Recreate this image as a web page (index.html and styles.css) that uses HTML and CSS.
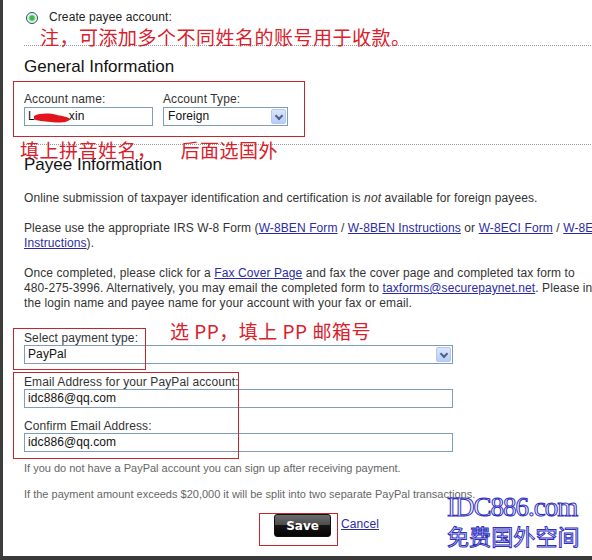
FILE: index.html
```html
<!DOCTYPE html>
<html lang="en">
<head>
  <meta charset="UTF-8" />
  <title>Create payee account</title>
  <link rel="stylesheet" href="styles.css">
</head>
<body>
  <div class="page">
    <div class="content">
      <div class="create-row"><span class="radio"></span>Create payee account:</div>

      <section class="block general">
        <h2>General Information</h2>
        <div class="field-row">
          <div class="field">
            <label>Account name:</label>
            <div class="box name-box">L<span class="hidden-part"></span>xin</div>
            <svg class="scribble" width="38" height="12" viewBox="0 0 38 12">
              <path d="M1 4 C7 1 16 1 24 3 C30 4 35 5 37 7 C35 11 26 11 18 10 C10 9 4 9 1 7 Z" fill="#e3151c"/>
            </svg>
          </div>
          <div class="field">
            <label>Account Type:</label>
            <div class="box select type-select">Foreign<span class="arrow"></span></div>
          </div>
        </div>
      </section>

      <section class="block payee">
        <h2>Payee Information</h2>
        <p>Online submission of taxpayer identification and certification is <em>not</em> available for foreign payees.</p>
        <p>Please use the appropriate IRS W-8 Form (<a href="#">W-8BEN Form</a> / <a href="#">W-8BEN Instructions</a> or <a href="#">W-8ECI Form</a> / <a href="#">W-8ECI Instructions</a>).</p>
        <p>Once completed, please click for a <a href="#">Fax Cover Page</a> and fax the cover page and completed tax form to <span class="nowrap">480-275-3996.</span> Alternatively, you may email the completed form to <a href="#">taxforms@securepaynet.net</a>. Please include the login name and payee name for your account with your fax or email.</p>

        <div class="form-part">
          <label>Select payment type:</label>
          <div class="box select wide">PayPal<span class="arrow"></span></div>
          <label class="gap">Email Address for your PayPal account:</label>
          <div class="box wide">idc886@qq.com</div>
          <label class="gap">Confirm Email Address:</label>
          <div class="box wide">idc886@qq.com</div>
        </div>

        <p class="note first">If you do not have a PayPal account you can sign up after receiving payment.</p>
        <p class="note">If the payment amount exceeds $20,000 it will be split into two separate PayPal transactions.</p>

        <div class="actions">
          <button class="save">Save</button>
          <a href="#" class="cancel">Cancel</a>
        </div>
      </section>
    </div>

    <!-- annotations drawn over the screenshot -->
    <div class="note-cn n1">注，可添加多个不同姓名的账号用于收款。</div>
    <div class="note-cn n2">填上拼音姓名，<span class="spacer"></span>后面选国外</div>
    <div class="note-cn n3">选 PP，填上 PP 邮箱号</div>
    <div class="mark m1"></div>
    <div class="mark m2"></div>
    <div class="mark m3"></div>
    <div class="mark m4"></div>

    <div class="watermark">
      <div class="wm-en">IDC886.com</div>
      <div class="wm-cn">免费国外空间</div>
    </div>
  </div>
</body>
</html>
```

FILE: styles.css
```css
* {
  box-sizing: border-box;
  margin: 0;
  padding: 0;
}

html, body {
  width: 592px;
  height: 560px;
  overflow: hidden;
  background: #fff;
}

body {
  font-family: "Liberation Sans", Arial, sans-serif;
  font-size: 12px;
  letter-spacing: 0.1px;
  color: #333;
}

.page {
  position: relative;
  width: 592px;
  height: 560px;
  border-left: 3px solid #3d3d3d;
  border-bottom: 4px solid #3a3a3a;
  overflow: hidden;
}

.content {
  width: 630px;
  padding-left: 21px;
  padding-top: 10px;
}

.nowrap {
  white-space: nowrap;
}

.create-row {
  display: flex;
  align-items: center;
  height: 15px;
  line-height: 15px;
  padding-left: 2px;
  color: #222;
}

.radio {
  width: 12px;
  height: 12px;
  border: 1px solid #1c5180;
  border-radius: 50%;
  margin-right: 11px;
  background: radial-gradient(circle, #3fb848 0 2px, #9ed9a0 3px, #f4f4f0 4px);
}

.block {
  border-top: 1px dotted #999;
}

.general {
  margin-top: 20px;
  padding-top: 11px;
  padding-bottom: 18px;
}

h2 {
  font-size: 17px;
  font-weight: normal;
  letter-spacing: 0;
  color: #111;
  line-height: 20px;
}

.field-row {
  display: flex;
  gap: 10px;
  margin-top: 15px;
}

.field {
  position: relative;
  display: flex;
  flex-direction: column;
}

label {
  display: block;
  line-height: 14px;
  color: #333;
}

.box {
  position: relative;
  height: 19px;
  border: 1px solid #7f9db9;
  background: #fff;
  line-height: 17px;
  padding-left: 3px;
  font-size: 12px;
  color: #111;
}

.name-box {
  width: 129px;
  margin-top: 1px;
}

.hidden-part {
  display: inline-block;
  width: 34px;
}

.scribble {
  position: absolute;
  left: 9px;
  top: 20px;
}

.type-select {
  width: 125px;
  margin-top: 1px;
  padding-left: 4px;
}

.arrow {
  position: absolute;
  right: 1px;
  top: 1px;
  width: 15px;
  height: 15px;
  border: 1px solid #b3c8f3;
  border-radius: 2px;
  background: linear-gradient(#d9e5fd, #b7cdf7);
}

.arrow::after {
  content: "";
  position: absolute;
  left: 4px;
  top: 3px;
  width: 4px;
  height: 4px;
  border-right: 2px solid #4d6185;
  border-bottom: 2px solid #4d6185;
  transform: rotate(45deg);
}

.payee {
  padding-top: 10px;
}

.payee p {
  line-height: 15px;
  margin-top: 15px;
}

.payee h2 + p {
  margin-top: 16px;
}

a {
  color: #2b2ba6;
}

.form-part {
  margin-top: 20px;
}

.form-part .gap {
  margin-top: 11px;
}

.wide {
  width: 429px;
}

.payee .note {
  font-size: 11px;
  color: #666;
  letter-spacing: 0;
  margin-top: 11px;
}

.payee .note.first {
  margin-top: 9px;
}

.actions {
  display: flex;
  align-items: flex-start;
  gap: 10px;
  margin-top: 12px;
  padding-left: 250px;
}

.save {
  width: 57px;
  height: 23px;
  border: 1px solid #111;
  border-radius: 3px;
  background: linear-gradient(#6b6b6b 0, #4a4a4a 50%, #151515 50%, #050505 100%);
  color: #fff;
  font-family: "DejaVu Sans", Verdana, sans-serif;
  font-weight: bold;
  font-size: 12px;
}

.cancel {
  font-size: 12px;
  line-height: 14px;
  margin-top: 3px;
}

.note-cn {
  position: absolute;
  font-family: "Noto Sans CJK SC", sans-serif;
  font-size: 19px;
  letter-spacing: 0.5px;
  line-height: 20px;
  color: #d9202b;
  white-space: nowrap;
}

.spacer {
  display: inline-block;
  width: 24px;
}

.n1 { left: 37px; top: 27px; }
.n2 { left: 17px; top: 140px; }
.n3 { left: 167px; top: 321px; }

.mark {
  position: absolute;
  border: 1px solid #c1272d;
}

.m1 { left: 10px; top: 81px; width: 292px; height: 56px; }
.m2 { left: 10px; top: 328px; width: 133px; height: 42px; }
.m3 { left: 10px; top: 372px; width: 226px; height: 87px; }
.m4 { left: 256px; top: 513px; width: 79px; height: 33px; }

.watermark {
  position: absolute;
  left: 444px;
  top: 494px;
  color: #f4f4ff;
  -webkit-text-stroke: 1px #3030c0;
  white-space: nowrap;
}

.wm-en {
  font-family: "Liberation Serif", serif;
  font-size: 27px;
  line-height: 26px;
  letter-spacing: -1px;
}

.wm-cn {
  font-family: "Noto Sans CJK SC", sans-serif;
  font-size: 22px;
  line-height: 30px;
}
```
